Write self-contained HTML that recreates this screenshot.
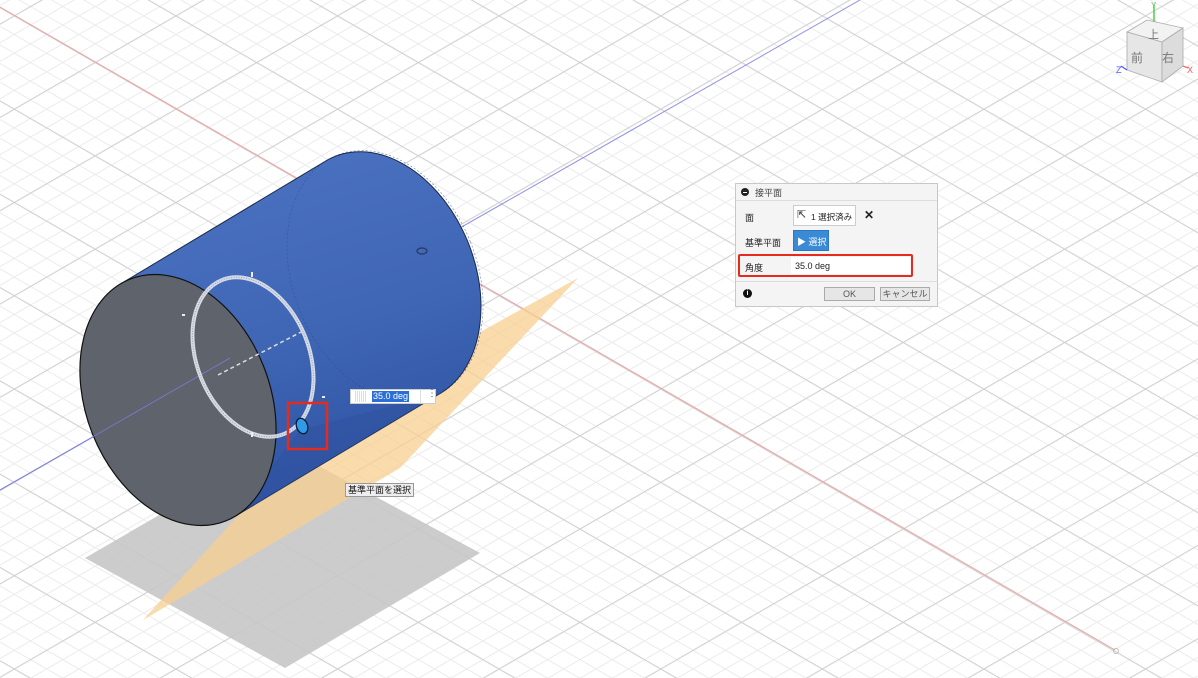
<!DOCTYPE html>
<html><head><meta charset="utf-8"><style>
html,body{margin:0;padding:0;width:1198px;height:678px;overflow:hidden;background:#fff;font-family:"Liberation Sans","Noto Sans CJK JP",sans-serif;}
svg{position:absolute;left:0;top:0}
.dlg{position:absolute;left:735px;top:183px;width:203px;height:124px;background:#f4f4f4;border:1px solid #c8c8c8;box-sizing:border-box;font-size:9px;color:#222}
.abs{position:absolute}
</style></head><body>
<svg width="1198" height="678" viewBox="0 0 1198 678">
<defs>
<pattern id="pa" patternUnits="userSpaceOnUse" width="40" height="16.16" y="6.06" patternTransform="rotate(30)"><rect x="0" y="0" width="40" height="1" fill="#ebebeb"/></pattern>
<pattern id="pA" patternUnits="userSpaceOnUse" width="40" height="80.8" y="6.06" patternTransform="rotate(30)"><rect x="0" y="0" width="40" height="1.1" fill="#d2d2d2"/></pattern>
<pattern id="pb" patternUnits="userSpaceOnUse" width="40" height="16.16" y="4.24" patternTransform="rotate(-30)"><rect x="0" y="0" width="40" height="1" fill="#ebebeb"/></pattern>
<pattern id="pB" patternUnits="userSpaceOnUse" width="40" height="80.8" y="20.4" patternTransform="rotate(-30)"><rect x="0" y="0" width="40" height="1.1" fill="#d2d2d2"/></pattern>
<linearGradient id="bl" x1="0" y1="0" x2="0.3" y2="1"><stop offset="0" stop-color="#4d74c2"/><stop offset="0.6" stop-color="#3f66b5"/><stop offset="1" stop-color="#2e54a3"/></linearGradient>
</defs>
<rect width="1198" height="678" fill="url(#pa)"/>
<rect width="1198" height="678" fill="url(#pb)"/>
<rect width="1198" height="678" fill="url(#pA)"/>
<rect width="1198" height="678" fill="url(#pB)"/>
<line x1="0" y1="7" x2="1115" y2="650" stroke="#f0a0a0" stroke-width="1"/>
<circle cx="1116" cy="651" r="2.5" fill="none" stroke="#bbb"/>
<line x1="0" y1="490" x2="860" y2="0" stroke="#8f8fe8" stroke-width="1"/>
<!-- shadow -->
<polygon points="85,558 280,445 480,553 285,668" fill="#c6c6c6" opacity="0.9"/>
<!-- orange plane -->
<polygon points="143,620 330,415 578,278 400,468" fill="#f7cf90" opacity="0.75"/>
<!-- body -->
<path d="M121.4,283.4 L328.4,159.4 A92 130 -21.7 0 1 441.6,392.6 L234.6,516.6 Z" fill="url(#bl)" stroke="#1a2a4a" stroke-width="1"/>
<path d="M300,430 L441.6,392.6 L234.6,516.6 Z" fill="#2f52a0" opacity="0.5"/>
<ellipse cx="385" cy="276" rx="92" ry="130" transform="rotate(-21.7 385 276)" fill="none" stroke="#2c4a8a" stroke-width="0.7" stroke-dasharray="2 2" opacity="0.6"/>
<ellipse cx="422" cy="251" rx="5" ry="3" fill="none" stroke="#2a3f70" stroke-width="1.5"/>
<!-- front face -->
<ellipse cx="178" cy="400" rx="92" ry="130" transform="rotate(-21.7 178 400)" fill="#5f636b" stroke="#111" stroke-width="1.2"/>
<line x1="0" y1="490" x2="230" y2="358" stroke="#7b7bd8" stroke-width="0.8"/>
<!-- gizmo ring -->
<ellipse cx="253" cy="357" rx="56" ry="83" transform="rotate(-22 253 357)" fill="none" stroke="#e6e8ee" stroke-width="4" opacity="0.9"/>
<ellipse cx="253" cy="357" rx="56" ry="83" transform="rotate(-22 253 357)" fill="none" stroke="#9aa0b0" stroke-width="1" stroke-dasharray="1 1.5"/>
<line x1="218" y1="375" x2="305" y2="330" stroke="#ddd" stroke-width="1.5" stroke-dasharray="4 3"/>
<rect x="251" y="272" width="2" height="5" fill="#eee"/><rect x="182" y="314" width="3" height="2" fill="#eee"/>
<rect x="322" y="396" width="3" height="2" fill="#eee"/><rect x="251" y="432" width="2" height="5" fill="#eee"/>
<!-- handle -->
<ellipse cx="302" cy="426" rx="5.5" ry="8" transform="rotate(-20 302 426)" fill="#2f9ae8" stroke="#0a1a30" stroke-width="1.3"/>
<rect x="288" y="403" width="39" height="46" fill="none" stroke="#e52a1e" stroke-width="2.5"/>
<!-- view cube -->
<line x1="1154" y1="5" x2="1154" y2="22" stroke="#4ad04a" stroke-width="1.5"/>
<text x="1151" y="8" font-size="8" fill="#4ad04a" font-family="Liberation Sans">Y</text>
<polygon points="1127,32 1147,20 1183,28 1162,42" fill="#f2f2f2" stroke="#aaa" stroke-width="0.8"/>
<polygon points="1127,32 1162,42 1162,82 1127,70" fill="#e6e6e6" stroke="#aaa" stroke-width="0.8"/>
<polygon points="1162,42 1183,28 1183,66 1162,82" fill="#dcdcdc" stroke="#aaa" stroke-width="0.8"/>
<text x="1148" y="38" font-size="11" fill="#777" font-family="Noto Sans CJK JP">上</text>
<text x="1131" y="62" font-size="12" fill="#777" font-family="Noto Sans CJK JP">前</text>
<text x="1162" y="62" font-size="12" fill="#777" font-family="Noto Sans CJK JP">右</text>
<line x1="1127" y1="70" x2="1121" y2="66" stroke="#55f" stroke-width="1.2"/>
<text x="1116" y="73" font-size="9" fill="#55f" font-family="Liberation Sans">Z</text>
<line x1="1183" y1="66" x2="1188" y2="68" stroke="#f55" stroke-width="1.2"/>
<text x="1187" y="73" font-size="9" fill="#f55" font-family="Liberation Sans">X</text>
</svg>
<!-- value input -->
<div class="abs" style="left:350px;top:389px;width:86px;height:15px;background:#fff;border:1px solid #ccc;box-sizing:border-box"></div>
<div class="abs" style="left:355px;top:391px;width:10px;height:11px;border-right:1px solid #ddd;background:repeating-linear-gradient(90deg,#ddd 0 1px,#fff 1px 2px)"></div>
<div class="abs" style="left:372px;top:391px;height:11px;background:#2a6fd6;color:#fff;font-size:9px;line-height:11px;padding:0 1px">35.0 deg</div>
<div class="abs" style="left:420px;top:389px;width:1px;height:15px;background:#ddd"></div>
<div class="abs" style="left:427px;top:388px;font-size:10px;color:#555">⋮</div>
<div class="abs" style="left:345px;top:483px;height:12px;background:#eee;border:1px solid #999;font-size:9px;line-height:12px;padding:0 2px;color:#111">基準平面を選択</div>
<!-- dialog -->
<div class="dlg">
<div class="abs" style="left:0;top:0;width:201px;height:16px;border-bottom:1px solid #ddd"></div>
<div class="abs" style="left:5px;top:4px;width:8px;height:8px;border-radius:50%;background:#222"></div>
<div class="abs" style="left:7px;top:7.5px;width:4px;height:1px;background:#fff"></div>
<div class="abs" style="left:19px;top:2px;color:#444">接平面</div>
<div class="abs" style="left:9px;top:27px">面</div>
<div class="abs" style="left:57px;top:21px;width:63px;height:21px;background:#fff;border:1px solid #ccc;box-sizing:border-box"></div>
<div class="abs" style="left:61px;top:24px;font-size:11px;color:#333">⇱</div>
<div class="abs" style="left:75px;top:27px;font-size:8.5px">1 選択済み</div>
<div class="abs" style="left:128px;top:24px;font-size:12px;font-weight:bold">✕</div>
<div class="abs" style="left:9px;top:52px">基準平面</div>
<div class="abs" style="left:57px;top:46px;width:36px;height:21px;background:#3a8ad6;border:1px solid #2a78c0;box-sizing:border-box"></div>
<div class="abs" style="left:61px;top:51px;color:#fff;font-size:9px">▶ 選択</div>
<div class="abs" style="left:2px;top:70px;width:175px;height:23px;border:2.5px solid #e52a1e;border-radius:2px;box-sizing:border-box;background:#f4f4f4"></div>
<div class="abs" style="left:55px;top:73px;width:119px;height:17px;background:#fff"></div>
<div class="abs" style="left:9px;top:77px">角度</div>
<div class="abs" style="left:59px;top:77px">35.0 deg</div>
<div class="abs" style="left:0;top:97px;width:201px;height:1px;background:#ddd"></div>
<div class="abs" style="left:7px;top:105px;width:9px;height:9px;border-radius:50%;background:#111;color:#fff;font-size:7px;line-height:9px;text-align:center;font-weight:bold">i</div>
<div class="abs" style="left:88px;top:103px;width:51px;height:14px;background:#e6e6e6;border:1px solid #aaa;box-sizing:border-box;text-align:center;line-height:12px;color:#555">OK</div>
<div class="abs" style="left:144px;top:103px;width:50px;height:14px;background:#e6e6e6;border:1px solid #aaa;box-sizing:border-box;text-align:center;line-height:12px;color:#555">キャンセル</div>
</div>
</body></html>
